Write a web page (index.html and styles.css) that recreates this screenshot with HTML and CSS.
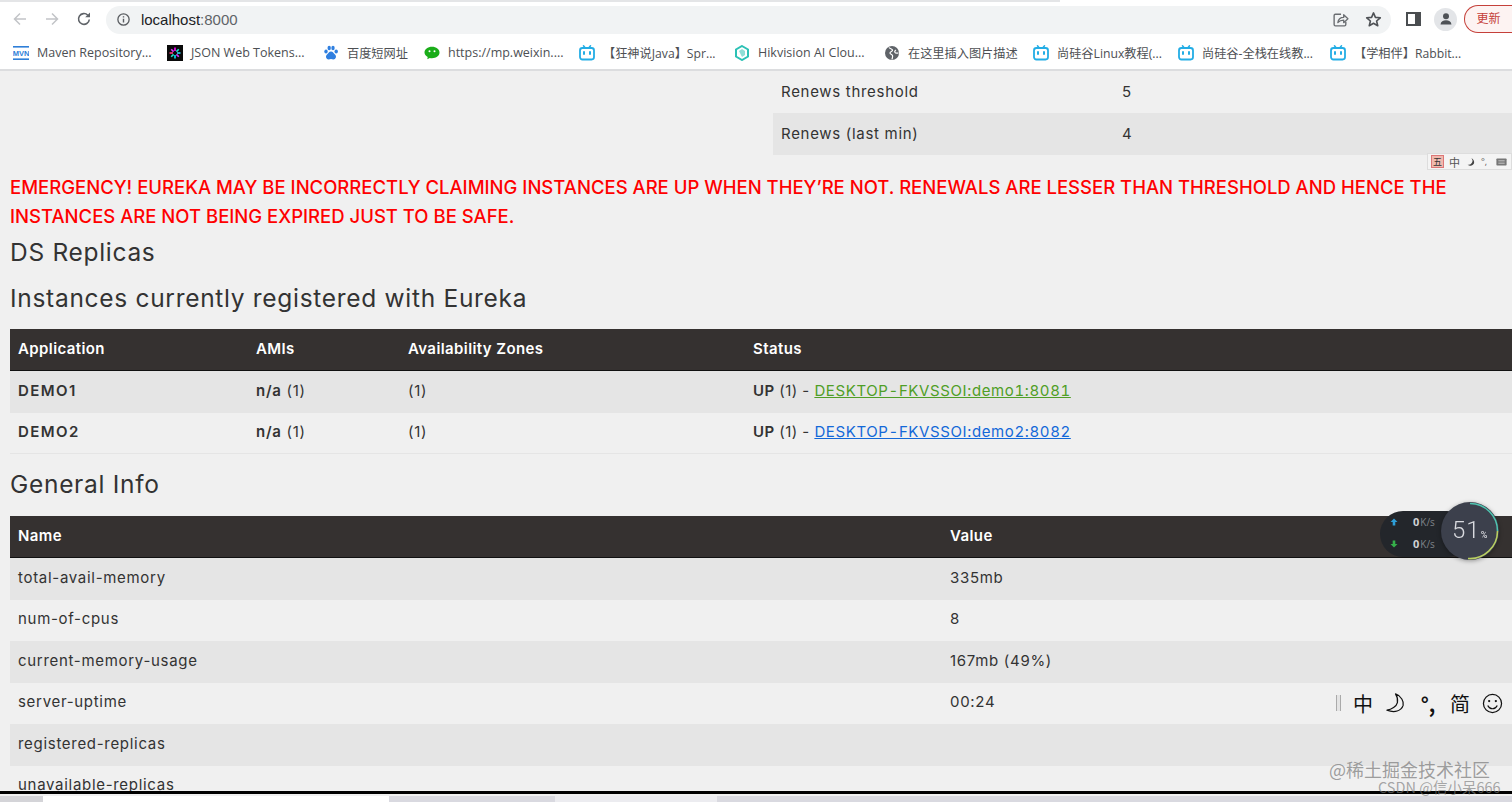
FILE: index.html
```html
<!DOCTYPE html>
<html lang="zh">
<head>
<meta charset="utf-8">
<title>Eureka</title>
<link rel="stylesheet" href="styles.css">
</head>
<body>
<svg class="defs" width="0" height="0" aria-hidden="true">
  <symbol id="tv" viewBox="0 0 16 16">
    <path d="M4.500 .8 6.300 3M11.500 .8 9.700 3" stroke="#23ade5" stroke-width="1.500" stroke-linecap="round" fill="none"/>
    <rect x="1" y="3" width="14" height="11.500" rx="2.400" fill="none" stroke="#23ade5" stroke-width="1.800"/>
    <path d="M5 7v2M11 7v2" stroke="#23ade5" stroke-width="2" stroke-linecap="round"/>
  </symbol>
</svg>
<div class="tabstrip"><div class="tabline"></div></div>
<header class="toolbar">
  <div class="navs">
    <svg class="nav" viewBox="0 0 16 16"><path d="M14 8H2.500M8 2.500 2.500 8 8 13.500" fill="none" stroke="#c2c4c7" stroke-width="1.500"/></svg>
    <svg class="nav" viewBox="0 0 16 16"><path d="M2 8h11.500M8 2.500 13.500 8 8 13.500" fill="none" stroke="#c2c4c7" stroke-width="1.500"/></svg>
    <svg class="nav" viewBox="0 0 16 16"><path d="M13.300 8.500A5.400 5.400 0 1 1 11.800 4.200" fill="none" stroke="#5f6368" stroke-width="1.600"/><path d="M14 1.500v4.800H9.200z" fill="#5f6368"/></svg>
  </div>
  <div class="omnibox">
    <svg class="info" viewBox="0 0 16 16"><circle cx="8" cy="8" r="6" fill="none" stroke="#5a5d61" stroke-width="1.400"/><path d="M8 7.200v4M8 4.500v1.400" stroke="#5a5d61" stroke-width="1.500"/></svg>
    <span class="url">localhost<span class="port">:8000</span></span>
    <span class="spacer"></span>
    <svg class="omni-icon" viewBox="0 0 16 16"><path d="M8.500 3H3.200A1.200 1.200 0 0 0 2 4.200v8.600A1.200 1.200 0 0 0 3.200 14h8.600a1.200 1.200 0 0 0 1.200-1.200V10" fill="none" stroke="#6a6d71" stroke-width="1.300"/><path d="M5.500 11c.4-3.300 2.700-5 5.500-5V3.500l4 3.800-4 3.700V8.500c-2.200 0-4 .7-5.500 2.500z" fill="none" stroke="#6a6d71" stroke-width="1.200" stroke-linejoin="round"/></svg>
    <svg class="omni-icon star" viewBox="0 0 16 16"><path d="M8 1.800 9.800 6l4.600.4-3.500 3 1.100 4.500L8 11.500l-4 2.400 1.100-4.500-3.500-3L6.200 6z" fill="none" stroke="#4f5256" stroke-width="1.500" stroke-linejoin="round"/></svg>
  </div>
  <svg class="panel" viewBox="0 0 15 14"><rect x="1" y="1" width="13" height="12" fill="none" stroke="#4a4d50" stroke-width="2"/><rect x="9" y="1" width="5" height="12" fill="#4a4d50"/></svg>
  <div class="avatar"><svg viewBox="0 0 16 16"><circle cx="8" cy="5.200" r="3" fill="#4d5156"/><path d="M2.500 13.500c.3-3 2.700-4.300 5.500-4.300s5.200 1.300 5.500 4.300z" fill="#4d5156"/></svg></div>
  <div class="update">更新</div>
</header>
<nav class="bookmarks">
  <div class="bm bm-maven"><svg viewBox="0 0 16 16"><rect y="1" width="16" height="1.600" fill="#2f7fd8"/><rect y="13.400" width="16" height="1.600" fill="#2f7fd8"/><text x="8" y="11" class="mvn">MVN</text></svg><span>Maven Repository...</span></div>
  <div class="bm bm-jwt"><svg viewBox="0 0 16 16"><rect width="16" height="16" fill="#0a0a0a"/><path d="M8 2.500v3.500" stroke="#f0f" stroke-width="1.600"/><path d="M8 10v3.500" stroke="#00e5ff" stroke-width="1.600"/><path d="M2.500 8H6" stroke="#ff3b7f" stroke-width="1.600"/><path d="M10 8h3.500" stroke="#32d2ff" stroke-width="1.600"/><path d="m4.200 4.200 2.400 2.400M9.400 9.400l2.400 2.400" stroke="#d63aff" stroke-width="1.600"/><path d="m11.800 4.200-2.400 2.400M6.600 9.400l-2.400 2.400" stroke="#1fe0c8" stroke-width="1.600"/></svg><span>JSON Web Tokens...</span></div>
  <div class="bm bm-baidu"><svg viewBox="0 0 16 16"><g fill="#2f7fe0"><ellipse cx="3" cy="6.500" rx="1.700" ry="2"/><ellipse cx="6.200" cy="3" rx="1.700" ry="2.200"/><ellipse cx="10" cy="3" rx="1.700" ry="2.200"/><ellipse cx="13.200" cy="6.500" rx="1.700" ry="2"/><path d="M8 6.500c2 0 2.500 1.800 4 3 2 1.700.7 5-1.600 5-1 0-1.500-.4-2.400-.4s-1.500.4-2.400.4C3.300 14.500 2 11.200 4 9.500c1.500-1.200 2-3 4-3z"/></g></svg><span class="cjk">百度短网址</span></div>
  <div class="bm bm-wx"><svg viewBox="0 0 16 16"><path d="M8 1.800c4.300 0 7.500 2.500 7.500 5.700s-3.200 5.700-7.500 5.700c-.8 0-1.500-.1-2.200-.3L3.300 14.300l.4-2.400C1.700 10.800.5 9.300.5 7.500.5 4.300 3.700 1.800 8 1.800z" fill="#1aad19"/><circle cx="5.500" cy="6.300" r="1" fill="#fff"/><circle cx="10.500" cy="6.300" r="1" fill="#fff"/></svg><span>https://mp.weixin....</span></div>
  <div class="bm bm-kuang"><svg viewBox="0 0 16 16"><use href="#tv"/></svg><span class="cjk">【狂神说Java】Spr...</span></div>
  <div class="bm bm-hik"><svg viewBox="0 0 16 16"><path d="M8 1 14 4.500v7L8 15 2 11.500v-7z" fill="none" stroke="#2cc1b5" stroke-width="2"/><path d="M5 6l3-2 3 2v4l-3 2z" fill="#8fded6"/></svg><span>Hikvision AI Clou...</span></div>
  <div class="bm bm-globe"><svg viewBox="0 0 16 16"><circle cx="8" cy="8" r="7" fill="#5f6368"/><path d="M5 2.500c1 1.500 3 1 3.500 2.500S6 6.500 6 8s2 1 2.500 2.500-.5 3-.5 4M12 5c-1 .5-1.500 1.500-1 2.500s2 .5 3.500.5" fill="none" stroke="#fff" stroke-width="1.200"/></svg><span class="cjk">在这里插入图片描述</span></div>
  <div class="bm bm-linux"><svg viewBox="0 0 16 16"><use href="#tv"/></svg><span class="cjk">尚硅谷Linux教程(...</span></div>
  <div class="bm bm-full"><svg viewBox="0 0 16 16"><use href="#tv"/></svg><span class="cjk">尚硅谷-全栈在线教...</span></div>
  <div class="bm bm-rabbit"><svg viewBox="0 0 16 16"><use href="#tv"/></svg><span class="cjk">【学相伴】Rabbit...</span></div>
</nav>
<main class="page">
  <div class="top-row">
    <table class="data top-table">
      <colgroup><col class="col-top1"><col></colgroup>
      <tbody>
        <tr class="plain"><td>Renews threshold</td><td>5</td></tr>
        <tr class="shade"><td>Renews (last min)</td><td>4</td></tr>
      </tbody>
    </table>
  </div>
  <h4 class="alert">EMERGENCY! EUREKA MAY BE INCORRECTLY CLAIMING INSTANCES ARE UP WHEN THEY’RE NOT. RENEWALS ARE LESSER THAN THRESHOLD AND HENCE THE INSTANCES ARE NOT BEING EXPIRED JUST TO BE SAFE.</h4>
  <h1 class="title title-ds">DS Replicas</h1>
  <h2 class="title title-inst">Instances currently registered with Eureka</h2>
  <table class="data apps">
    <colgroup><col class="col-app"><col class="col-ami"><col class="col-zone"><col></colgroup>
    <thead><tr><th>Application</th><th>AMIs</th><th>Availability Zones</th><th>Status</th></tr></thead>
    <tbody>
      <tr class="shade"><td><b class="app-name">DEMO1</b></td><td><b>n/a</b> (1)</td><td>(1)</td><td class="status"><b>UP</b> (1) - <a class="link-green" href="#">DESKTOP-FKVSSOI:demo1:8081</a></td></tr>
      <tr class="plain last"><td><b class="app-name">DEMO2</b></td><td><b>n/a</b> (1)</td><td>(1)</td><td class="status"><b>UP</b> (1) - <a class="link-blue" href="#">DESKTOP-FKVSSOI:demo2:8082</a></td></tr>
    </tbody>
  </table>
  <h2 class="title title-gen">General Info</h2>
  <table class="data info-table">
    <colgroup><col class="col-name"><col></colgroup>
    <thead><tr><th>Name</th><th>Value</th></tr></thead>
    <tbody>
      <tr class="shade"><td>total-avail-memory</td><td>335mb</td></tr>
      <tr class="plain"><td>num-of-cpus</td><td>8</td></tr>
      <tr class="shade"><td>current-memory-usage</td><td>167mb (49%)</td></tr>
      <tr class="plain"><td>server-uptime</td><td>00:24</td></tr>
      <tr class="shade"><td>registered-replicas</td><td></td></tr>
      <tr class="plain"><td>unavailable-replicas</td><td></td></tr>
    </tbody>
  </table>
</main>
<footer class="bottom">
  <div class="seg seg-a"></div><div class="seg seg-b"></div><div class="seg seg-c"></div><div class="seg seg-d"></div><div class="seg seg-e"></div>
</footer>

<div class="ime-small"><span class="ime-logo">五</span><span>中</span><svg viewBox="0 0 12 12"><path d="M7 1.500a4.500 4.500 0 0 1-4.500 7.500A4.700 4.700 0 0 0 10 8 5 5 0 0 0 7 1.500z" fill="#444"/></svg><span class="ime-dot">°,</span><svg viewBox="0 0 14 10"><rect x=".5" y=".5" width="13" height="9" rx="1" fill="#777"/><path d="M3 3.500h8M3 6.500h8" stroke="#ddd"/></svg></div>

<div class="speed">
  <div class="speed-pill">
    <div class="speed-row"><svg viewBox="0 0 8 8"><path d="M4 .5 7.500 4H5.300v3.500H2.700V4H.5z" fill="#2e9fd8"/></svg><b>0</b><span>K/s</span></div>
    <div class="speed-row"><svg viewBox="0 0 8 8"><path d="M4 7.500 .5 4h2.200V.5h2.600V4h2.200z" fill="#35b04a"/></svg><b>0</b><span>K/s</span></div>
  </div>
  <div class="speed-dial">
    <svg viewBox="0 0 60 60"><circle cx="30" cy="30" r="29" fill="#3c404c"/><path d="M30 2.500A27.500 27.500 0 0 1 57.500 30" fill="none" stroke="#4fc4b0" stroke-width="1.600"/><path d="M57.500 30A27.500 27.500 0 0 1 28 57.500" fill="none" stroke="#b9cf62" stroke-width="1.600"/></svg>
    <span class="dial-num">51<i>%</i></span>
  </div>
</div>

<div class="ime-big">
  <span class="ime-bar"></span>
  <span>中</span>
  <svg viewBox="0 0 22 22"><path d="M11 1C17 3 20 9 19 13 17 19 10 21 2 18 7 17.500 12 14 13 10 13.500 7 13 4 11 1z" fill="none" stroke="#111" stroke-width="1.300" stroke-linejoin="round"/></svg>
  <span class="ime-punct">°,</span>
  <span>简</span>
  <svg viewBox="0 0 22 22"><circle cx="11" cy="11" r="9.500" fill="none" stroke="#111" stroke-width="1.300"/><circle cx="7.500" cy="8.500" r="1.200" fill="#111"/><circle cx="14.500" cy="8.500" r="1.200" fill="#111"/><path d="M6 13c1.200 2.500 3 3.500 5 3.500s3.800-1 5-3.500" fill="none" stroke="#111" stroke-width="1.300"/></svg>
</div>

<div class="mark mark-juejin">@稀土掘金技术社区</div>
<div class="mark mark-csdn">CSDN @信小呆666</div>
</body>
</html>
```
FILE: styles.css
```css
* { box-sizing: border-box; }
html, body { margin: 0; padding: 0; }
body {
  width: 1512px;
  height: 802px;
  overflow: hidden;
  position: relative;
  display: flex;
  flex-direction: column;
  background: #f0f0f0;
  font-family: "Open Sans", "Noto Sans CJK SC", sans-serif;
  color: #333;
}
.defs { position: absolute; }

.tabstrip { height: 3px; background: #fff; }
.tabline { width: 1060px; height: 2px; background: #e4e5e7; }

.toolbar {
  height: 32px;
  background: #fff;
  display: flex;
  align-items: center;
}
.navs { display: flex; gap: 16px; padding-left: 12px; width: 106px; }
.nav { width: 16px; height: 16px; flex: none; }
.omnibox {
  width: 1287px;
  height: 28px;
  margin-top: 1px;
  background: #f1f3f4;
  border-radius: 14px;
  display: flex;
  align-items: center;
  padding-left: 10px;
  padding-right: 9px;
}
.info { width: 15px; height: 15px; }
.url { font-family: "Liberation Sans", sans-serif; font-size: 15px; color: #202124; margin-left: 10px; }
.port { color: #5f6368; }
.spacer { flex: 1; }
.omni-icon { width: 17px; height: 17px; }
.star { margin-left: 16px; }
.panel { width: 15px; height: 14px; margin-left: 15px; }
.avatar {
  width: 23px; height: 23px; border-radius: 50%;
  background: #e3e5e8; margin-left: 13px;
  display: flex; align-items: center; justify-content: center;
}
.avatar svg { width: 16px; height: 16px; }
.update {
  width: 48px; height: 28px; margin-left: 7px;
  border: 1px solid #c5403a; border-right: none;
  border-radius: 14px 0 0 14px;
  background: #fdf3f2; color: #c5403a;
  font-size: 12px; line-height: 26px; text-align: center;
}

.bookmarks {
  height: 36px;
  background: #fff;
  border-bottom: 2px solid #dcdddf;
  display: flex;
  align-items: center;
  padding-left: 13px;
  padding-top: 1px;
  font-family: "Open Sans", "Noto Sans CJK SC", sans-serif;
  font-size: 12.5px;
  color: #4d4f53;
  white-space: nowrap;
}
.bm { display: flex; align-items: center; gap: 8px; flex: none; }
.bm svg { width: 16px; height: 16px; flex: none; }
.cjk { font-size: 12.2px; }
.mvn { font: 700 7.5px "Liberation Sans", sans-serif; fill: #2f7fd8; text-anchor: middle; }
.bm-maven { width: 154px; }
.bm-jwt { width: 156px; }
.bm-baidu { width: 101px; }
.bm-wx { width: 155px; }
.bm-kuang { width: 155px; }
.bm-hik { width: 150px; }
.bm-globe { width: 149px; }
.bm-linux { width: 145px; }
.bm-full { width: 152px; }

.page {
  flex: 1;
  overflow: hidden;
  padding-left: 10px;
  font-family: "Inter", "Noto Sans CJK SC", sans-serif;
  font-size: 15px;
  letter-spacing: .7px;
}
.top-row { display: flex; justify-content: flex-end; }
.data { border-collapse: collapse; table-layout: fixed; width: 100%; }
.top-table { width: 739px; }
.col-top1 { width: 341px; }
.col-app { width: 238px; }
.col-ami { width: 152px; }
.col-zone { width: 345px; }
.col-name { width: 932px; }
.data th, .data td {
  padding: 0 8px 4px;
  text-align: left;
  font-weight: 400;
  vertical-align: middle;
}
.data th {
  height: 42px;
  padding-bottom: 3px;
  background: #353130;
  color: #fff;
  font-weight: 600;
  letter-spacing: .4px;
  box-shadow: inset 0 -1px #111;
}
.data td b { font-weight: 600; }
.data td .app-name { letter-spacing: 1.4px; }
.shade td { height: 42px; background: #e5e5e5; }
.plain td { height: 41px; background: #f0f0f0; }
.top-table td { height: 42px; padding-bottom: 2px; }
.last td { box-shadow: inset 0 -1px #e5e5e5; }
.data .status { letter-spacing: .45px; }
.link-green, .link-blue { letter-spacing: .62px; font-variant-numeric: tabular-nums; }
.link-green { color: #4f9e26; }
.link-blue { color: #1368d8; }

.alert {
  margin: 18px 0 0;
  font-size: 18.5px;
  line-height: 29px;
  font-weight: 500;
  color: #f00;
  letter-spacing: 0;
}
.title { margin: 0; font-weight: 400; color: #333; letter-spacing: .7px; font-size: 24.5px; line-height: 36px; }
.title-ds { margin-top: 3px; }
.title-inst { margin-top: 10px; margin-bottom: 13px; }
.title-gen { margin-top: 12px; margin-bottom: 14px; }

.bottom {
  height: 11px;
  display: flex;
  background: #e8e8ec;
  border-top: 3px solid #000;
}
.seg { height: 100%; border-top: 2px solid #f0f0f0; }
.seg-a { width: 43px; background: #d4d4d8; }
.seg-b { width: 346px; background: #fff; }
.seg-c { width: 166px; background: #d9d9e0; }
.seg-d { width: 162px; background: #ececf0; }
.seg-e { flex: 1; background: #d9d9e0; }

.ime-small {
  position: absolute; left: 1427px; top: 153px;
  width: 85px; height: 17px;
  background: #f4f4f4; border: 1px solid #ddd;
  display: flex; align-items: center; gap: 5px;
  padding-left: 3px; font-size: 11px; color: #555;
}
.ime-small svg { width: 11px; height: 10px; }
.ime-logo {
  width: 13px; height: 13px; background: #f0b9ae; border: 1px solid #d77; font-size: 9px;
  display: flex; align-items: center; justify-content: center; color: #333;
}
.ime-dot { font-size: 9px; width: 10px; }

.speed { position: absolute; left: 1380px; top: 501px; width: 120px; height: 62px; }
.speed-pill {
  position: absolute; left: 0; top: 10px;
  width: 90px; height: 46px;
  background: #23262b; border-radius: 23px;
  padding: 0 0 0 10px;
  display: flex; flex-direction: column; gap: 1px;
}
.speed-row { display: flex; align-items: center; height: 21px; color: #7f8389; font-size: 10px; }
.speed-row svg { width: 8px; height: 8px; margin-right: 15px; }
.speed-row b { color: #cfd1d4; font-size: 11px; margin-right: 1px; }
.speed-dial { position: absolute; left: 60px; top: 0; width: 60px; height: 60px; filter: drop-shadow(0 1px 2px rgba(0,0,0,.35)); }
.speed-dial svg { width: 60px; height: 60px; display: block; }
.dial-num {
  position: absolute; left: 12px; top: 15px;
  font-family: "Roboto", sans-serif; font-weight: 300; font-size: 24px; line-height: 28px;
  color: #d9dadf; letter-spacing: 1px;
}
.dial-num i { font-style: normal; font-size: 9px; font-weight: 500; }

.ime-big {
  position: absolute; left: 1336px; top: 691px;
  display: flex; align-items: center; gap: 12px;
  font-family: "Noto Sans CJK SC", sans-serif;
  font-size: 20px; color: #111; height: 24px;
}
.ime-big svg { width: 21px; height: 21px; }
.ime-bar { width: 5px; height: 16px; border-left: 1px solid #aaa; border-right: 1px solid #aaa; background: #e4e4e4; }
.ime-punct { font-weight: 700; font-size: 20px; width: 20px; text-align: center; }

.mark { position: absolute; font-family: "Noto Sans CJK SC", sans-serif; white-space: nowrap; }
.mark-juejin { left: 1329px; top: 757px; font-size: 18px; line-height: 24px; color: rgba(120,120,120,.7); }
.mark-csdn { left: 1378px; top: 778px; font-size: 14.5px; line-height: 18px; color: rgba(120,120,120,.65); }
```
